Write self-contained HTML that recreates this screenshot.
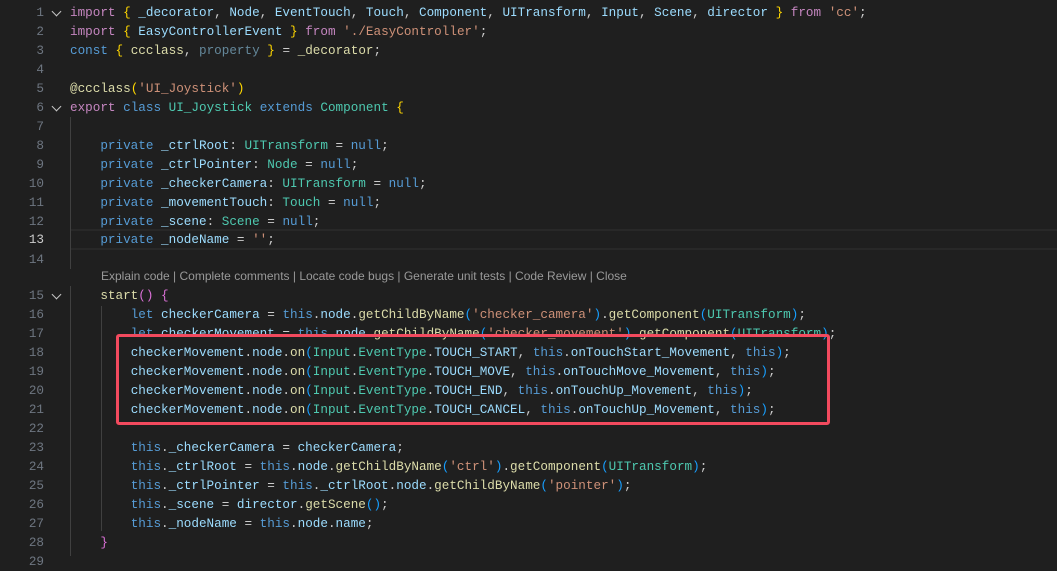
<!DOCTYPE html>
<html><head><meta charset="utf-8"><style>
html,body{margin:0;padding:0;background:#1f1f1f;width:1057px;height:557px;overflow:hidden}
.l{position:absolute;left:0;height:19px;line-height:19px;white-space:pre;font-family:"Liberation Mono",monospace;font-size:12.65px;color:#cccccc}
.n{position:absolute;left:0;width:44px;text-align:right;color:#6e7681}
.n.a{color:#cccccc}
.c{position:absolute;left:70px}
.f{position:absolute;left:53px;top:5px;width:6px;height:6px;border-left:1.5px solid #c5c5c5;border-bottom:1.5px solid #c5c5c5;transform:rotate(-45deg)}
.k{color:#c586c0}.b{color:#569cd6}.v{color:#9cdcfe}.t{color:#4ec9b0}.s{color:#ce9178}.fn{color:#dcdcaa}
.g{color:#ffd700}.p{color:#da70d6}.q{color:#179fff}.u{color:#9cdcfe;opacity:.55}
.guide{position:absolute;width:1px;background:#404040}
.lens{position:absolute;left:101px;top:267px;font-family:"Liberation Sans",sans-serif;font-size:12px;color:#999;white-space:pre;line-height:19px}
</style></head><body>
<div style="position:absolute;left:70px;top:229px;width:987px;height:17px;border-top:2px solid #282828;border-bottom:2px solid #282828"></div>
<div class="guide" style="left:70px;top:117px;height:152px"></div>
<div class="guide" style="left:70px;top:286px;height:270px"></div>
<div class="guide" style="left:101px;top:306px;height:225px"></div>

<div class="l" style="top:3px"><span class="n">1</span><span class="f"></span><span class="c"><span class="k">import</span> <span class="g">{</span> <span class="v">_decorator</span>, <span class="v">Node</span>, <span class="v">EventTouch</span>, <span class="v">Touch</span>, <span class="v">Component</span>, <span class="v">UITransform</span>, <span class="v">Input</span>, <span class="v">Scene</span>, <span class="v">director</span> <span class="g">}</span> <span class="k">from</span> <span class="s">'cc'</span>;</span></div>
<div class="l" style="top:22px"><span class="n">2</span><span class="c"><span class="k">import</span> <span class="g">{</span> <span class="v">EasyControllerEvent</span> <span class="g">}</span> <span class="k">from</span> <span class="s">'./EasyController'</span>;</span></div>
<div class="l" style="top:41px"><span class="n">3</span><span class="c"><span class="b">const</span> <span class="g">{</span> <span class="fn">ccclass</span>, <span class="u">property</span> <span class="g">}</span> = <span class="fn">_decorator</span>;</span></div>
<div class="l" style="top:60px"><span class="n">4</span></div>
<div class="l" style="top:79px"><span class="n">5</span><span class="c"><span class="fn">@ccclass</span><span class="g">(</span><span class="s">'UI_Joystick'</span><span class="g">)</span></span></div>
<div class="l" style="top:98px"><span class="n">6</span><span class="f"></span><span class="c"><span class="k">export</span> <span class="b">class</span> <span class="t">UI_Joystick</span> <span class="b">extends</span> <span class="t">Component</span> <span class="g">{</span></span></div>
<div class="l" style="top:117px"><span class="n">7</span></div>
<div class="l" style="top:136px"><span class="n">8</span><span class="c">    <span class="b">private</span> <span class="v">_ctrlRoot</span>: <span class="t">UITransform</span> = <span class="b">null</span>;</span></div>
<div class="l" style="top:155px"><span class="n">9</span><span class="c">    <span class="b">private</span> <span class="v">_ctrlPointer</span>: <span class="t">Node</span> = <span class="b">null</span>;</span></div>
<div class="l" style="top:174px"><span class="n">10</span><span class="c">    <span class="b">private</span> <span class="v">_checkerCamera</span>: <span class="t">UITransform</span> = <span class="b">null</span>;</span></div>
<div class="l" style="top:193px"><span class="n">11</span><span class="c">    <span class="b">private</span> <span class="v">_movementTouch</span>: <span class="t">Touch</span> = <span class="b">null</span>;</span></div>
<div class="l" style="top:212px"><span class="n">12</span><span class="c">    <span class="b">private</span> <span class="v">_scene</span>: <span class="t">Scene</span> = <span class="b">null</span>;</span></div>
<div class="l" style="top:230px"><span class="n a">13</span><span class="c">    <span class="b">private</span> <span class="v">_nodeName</span> = <span class="s">''</span>;</span></div>
<div class="l" style="top:250px"><span class="n">14</span></div>
<div class="lens">Explain code | Complete comments | Locate code bugs | Generate unit tests | Code Review | Close</div>
<div class="l" style="top:286px"><span class="n">15</span><span class="f"></span><span class="c">    <span class="fn">start</span><span class="p">()</span> <span class="p">{</span></span></div>
<div class="l" style="top:305px"><span class="n">16</span><span class="c">        <span class="b">let</span> <span class="v">checkerCamera</span> = <span class="b">this</span>.<span class="v">node</span>.<span class="fn">getChildByName</span><span class="q">(</span><span class="s">'checker_camera'</span><span class="q">)</span>.<span class="fn">getComponent</span><span class="q">(</span><span class="t">UITransform</span><span class="q">)</span>;</span></div>
<div class="l" style="top:324px"><span class="n">17</span><span class="c">        <span class="b">let</span> <span class="v">checkerMovement</span> = <span class="b">this</span>.<span class="v">node</span>.<span class="fn">getChildByName</span><span class="q">(</span><span class="s">'checker_movement'</span><span class="q">)</span>.<span class="fn">getComponent</span><span class="q">(</span><span class="t">UITransform</span><span class="q">)</span>;</span></div>
<div class="l" style="top:343px"><span class="n">18</span><span class="c">        <span class="v">checkerMovement</span>.<span class="v">node</span>.<span class="fn">on</span><span class="q">(</span><span class="t">Input</span>.<span class="t">EventType</span>.<span class="v">TOUCH_START</span>, <span class="b">this</span>.<span class="v">onTouchStart_Movement</span>, <span class="b">this</span><span class="q">)</span>;</span></div>
<div class="l" style="top:362px"><span class="n">19</span><span class="c">        <span class="v">checkerMovement</span>.<span class="v">node</span>.<span class="fn">on</span><span class="q">(</span><span class="t">Input</span>.<span class="t">EventType</span>.<span class="v">TOUCH_MOVE</span>, <span class="b">this</span>.<span class="v">onTouchMove_Movement</span>, <span class="b">this</span><span class="q">)</span>;</span></div>
<div class="l" style="top:381px"><span class="n">20</span><span class="c">        <span class="v">checkerMovement</span>.<span class="v">node</span>.<span class="fn">on</span><span class="q">(</span><span class="t">Input</span>.<span class="t">EventType</span>.<span class="v">TOUCH_END</span>, <span class="b">this</span>.<span class="v">onTouchUp_Movement</span>, <span class="b">this</span><span class="q">)</span>;</span></div>
<div class="l" style="top:400px"><span class="n">21</span><span class="c">        <span class="v">checkerMovement</span>.<span class="v">node</span>.<span class="fn">on</span><span class="q">(</span><span class="t">Input</span>.<span class="t">EventType</span>.<span class="v">TOUCH_CANCEL</span>, <span class="b">this</span>.<span class="v">onTouchUp_Movement</span>, <span class="b">this</span><span class="q">)</span>;</span></div>
<div class="l" style="top:419px"><span class="n">22</span></div>
<div class="l" style="top:438px"><span class="n">23</span><span class="c">        <span class="b">this</span>.<span class="v">_checkerCamera</span> = <span class="v">checkerCamera</span>;</span></div>
<div class="l" style="top:457px"><span class="n">24</span><span class="c">        <span class="b">this</span>.<span class="v">_ctrlRoot</span> = <span class="b">this</span>.<span class="v">node</span>.<span class="fn">getChildByName</span><span class="q">(</span><span class="s">'ctrl'</span><span class="q">)</span>.<span class="fn">getComponent</span><span class="q">(</span><span class="t">UITransform</span><span class="q">)</span>;</span></div>
<div class="l" style="top:476px"><span class="n">25</span><span class="c">        <span class="b">this</span>.<span class="v">_ctrlPointer</span> = <span class="b">this</span>.<span class="v">_ctrlRoot</span>.<span class="v">node</span>.<span class="fn">getChildByName</span><span class="q">(</span><span class="s">'pointer'</span><span class="q">)</span>;</span></div>
<div class="l" style="top:495px"><span class="n">26</span><span class="c">        <span class="b">this</span>.<span class="v">_scene</span> = <span class="v">director</span>.<span class="fn">getScene</span><span class="q">()</span>;</span></div>
<div class="l" style="top:514px"><span class="n">27</span><span class="c">        <span class="b">this</span>.<span class="v">_nodeName</span> = <span class="b">this</span>.<span class="v">node</span>.<span class="v">name</span>;</span></div>
<div class="l" style="top:533px"><span class="n">28</span><span class="c">    <span class="p">}</span></span></div>
<div class="l" style="top:552px"><span class="n">29</span></div>

<div style="position:absolute;left:116px;top:334px;width:708px;height:85px;border:3px solid #f24a5e;border-radius:3px"></div>
</body></html>
